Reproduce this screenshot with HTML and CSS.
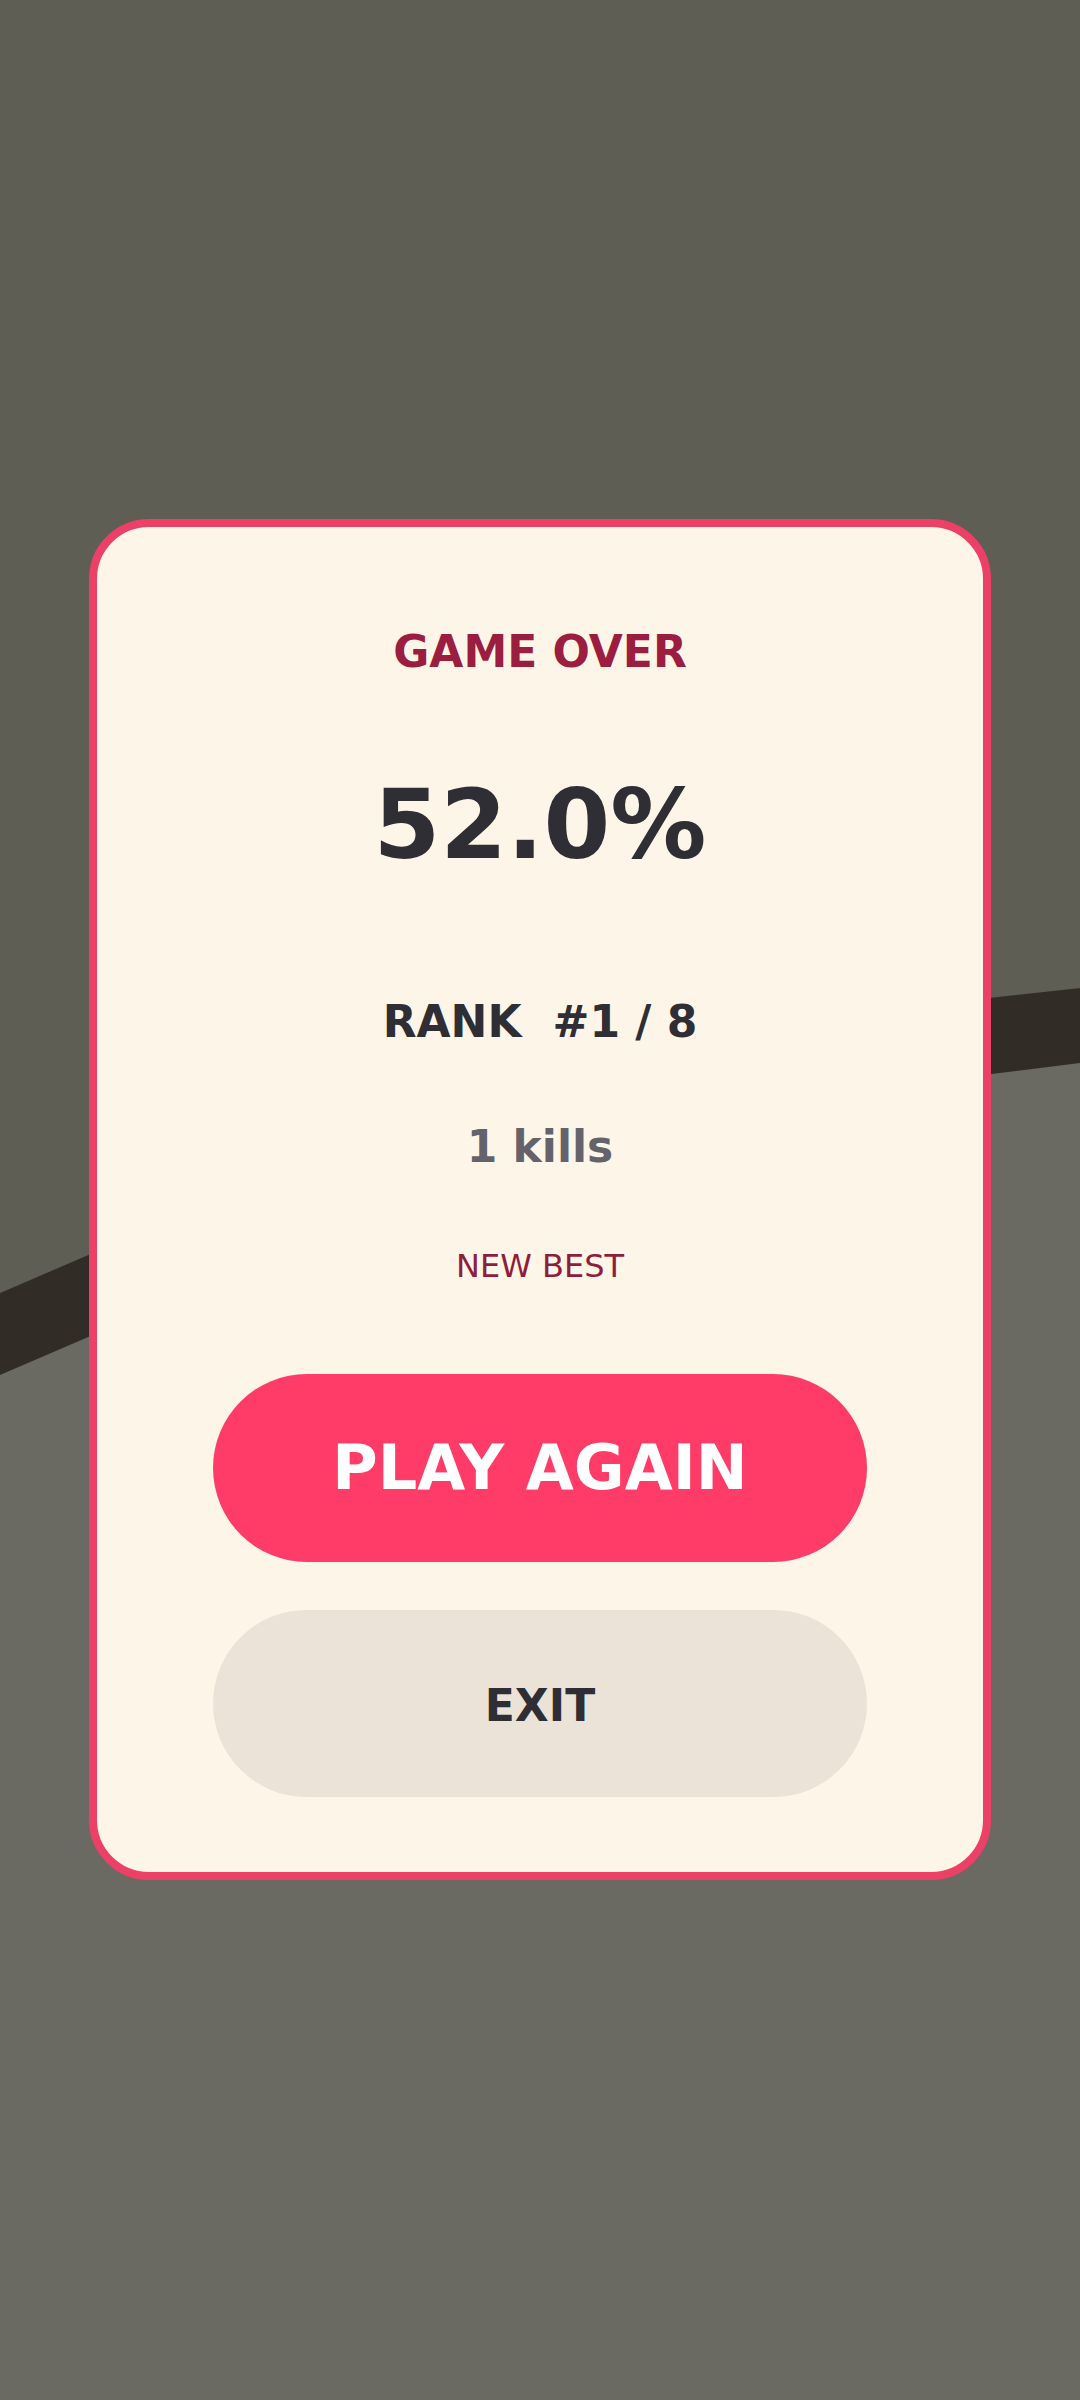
FILE: index.html
```html
<!DOCTYPE html>
<html lang="en">
<head>
<meta charset="utf-8">
<title>Game Over</title>
<link rel="stylesheet" href="styles.css">
</head>
<body>
<div class="screen">
  <svg class="arena" width="1080" height="2400" viewBox="0 0 1080 2400" aria-hidden="true">
    <rect x="0" y="0" width="1080" height="2400" fill="#6b6a62"/>
    <polygon points="0,0 1080,0 1080,988 581,1043 0,1293" fill="#5f5e54"/>
    <polygon points="0,1293 581,1043 1080,988 1080,1063 581,1125 0,1375" fill="#312d26"/>
  </svg>
  <div class="overlay">
    <div class="card">
      <div class="title">GAME OVER</div>
      <div class="score">52.0%</div>
      <div class="rank"><span>RANK</span><span>#1 / 8</span></div>
      <div class="kills">1 kills</div>
      <div class="best">NEW BEST</div>
      <div class="btn btn-play">PLAY AGAIN</div>
      <div class="btn btn-exit">EXIT</div>
    </div>
  </div>
</div>
</body>
</html>
```
FILE: styles.css
```css
* { box-sizing: border-box; }
html, body { margin: 0; padding: 0; }
body {
  width: 1080px;
  height: 2400px;
  overflow: hidden;
  background: #6b6a62;
  font-family: "DejaVu Sans", Verdana, sans-serif;
}
.screen {
  position: relative;
  width: 1080px;
  height: 2400px;
}
.arena {
  position: absolute;
  left: 0;
  top: 0;
  display: block;
}
.overlay {
  position: relative;
  padding-top: 519px;
  display: flex;
  justify-content: center;
}
.card {
  width: 902px;
  height: 1361px;
  background: #fdf6e8;
  border: 8px solid #ec4066;
  border-radius: 60px;
  display: flex;
  flex-direction: column;
  align-items: center;
  padding-top: 103px;
}
.title {
  font-size: 44px;
  line-height: 44px;
  font-weight: bold;
  color: #9b1d3f;
}
.score {
  margin-top: 103px;
  font-size: 96px;
  line-height: 96px;
  font-weight: bold;
  color: #2e2e34;
}
.rank {
  margin-top: 127px;
  font-size: 44px;
  line-height: 44px;
  font-weight: bold;
  color: #2e2e34;
  display: flex;
  gap: 31px;
}
.kills {
  margin-top: 81px;
  font-size: 44px;
  line-height: 44px;
  font-weight: bold;
  color: #64636b;
}
.best {
  margin-top: 81px;
  font-size: 32px;
  line-height: 32px;
  color: #8f1d3c;
}
.btn {
  width: 654px;
  height: 188px;
  border-radius: 94px;
  display: flex;
  align-items: center;
  justify-content: center;
  font-weight: bold;
}
.btn-play {
  margin-top: 92px;
  background: #ff3c67;
  color: #ffffff;
  font-size: 62px;
  line-height: 62px;
}
.btn-exit {
  margin-top: 48px;
  height: 187px;
  background: #ebe3d7;
  color: #2e2e34;
  font-size: 44px;
  line-height: 44px;
  padding-top: 4px;
}
```
